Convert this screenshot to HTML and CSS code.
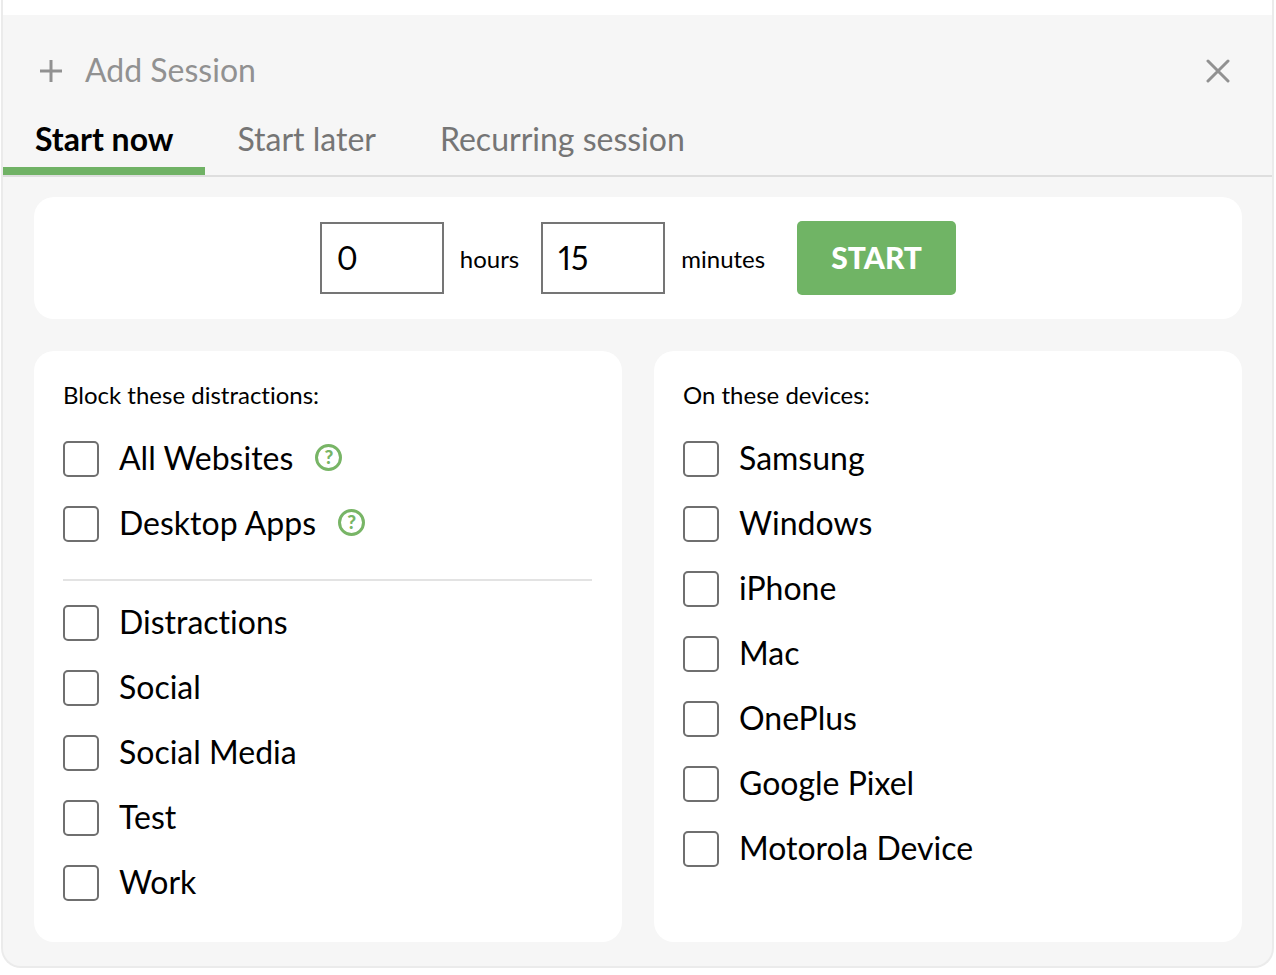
FILE: index.html
```html
<!DOCTYPE html>
<html lang="en">
<head>
<meta charset="utf-8">
<meta name="viewport" content="width=device-width, initial-scale=1">
<title>Add Session</title>
<link rel="stylesheet" href="styles.css">
</head>
<body>
<main class="panel">
  <header class="panel-header">
    <h1 class="panel-title">
      <svg class="icon" viewBox="0 0 24 24" aria-hidden="true"><path d="M12 1v22M1 12h22"/></svg>
      <span class="panel-name">Add Session</span>
    </h1>
    <button class="close" type="button" aria-label="Close">
      <svg class="icon icon-close" viewBox="0 0 24 24" aria-hidden="true"><path d="M2 2l20 20M22 2L2 22"/></svg>
    </button>
  </header>
  <nav class="tabs" role="tablist">
    <button class="tab tab-active" type="button" role="tab" aria-selected="true">Start now</button>
    <button class="tab" type="button" role="tab" aria-selected="false">Start later</button>
    <button class="tab" type="button" role="tab" aria-selected="false">Recurring session</button>
  </nav>
  <form class="content">
    <section class="card duration">
      <input class="time" id="hours" type="text" inputmode="numeric" value="0">
      <label class="unit unit-hours" for="hours">hours</label>
      <input class="time" id="minutes" type="text" inputmode="numeric" value="15">
      <label class="unit unit-minutes" for="minutes">minutes</label>
      <button class="start" type="button">START</button>
    </section>
    <div class="columns">
      <section class="card list-card">
        <h2 class="list-title">Block these distractions:</h2>
        <ul class="list">
          <li class="row"><label class="option"><input class="check" type="checkbox"><span class="name">All Websites</span></label><button class="help" type="button" aria-label="About all websites">?</button></li>
          <li class="row"><label class="option"><input class="check" type="checkbox"><span class="name">Desktop Apps</span></label><button class="help" type="button" aria-label="About desktop apps">?</button></li>
        </ul>
        <hr class="divider">
        <ul class="list">
          <li class="row"><label class="option"><input class="check" type="checkbox"><span class="name">Distractions</span></label></li>
          <li class="row"><label class="option"><input class="check" type="checkbox"><span class="name">Social</span></label></li>
          <li class="row"><label class="option"><input class="check" type="checkbox"><span class="name">Social Media</span></label></li>
          <li class="row"><label class="option"><input class="check" type="checkbox"><span class="name">Test</span></label></li>
          <li class="row"><label class="option"><input class="check" type="checkbox"><span class="name">Work</span></label></li>
        </ul>
      </section>
      <section class="card list-card">
        <h2 class="list-title">On these devices:</h2>
        <ul class="list">
          <li class="row"><label class="option"><input class="check" type="checkbox"><span class="name">Samsung</span></label></li>
          <li class="row"><label class="option"><input class="check" type="checkbox"><span class="name">Windows</span></label></li>
          <li class="row"><label class="option"><input class="check" type="checkbox"><span class="name">iPhone</span></label></li>
          <li class="row"><label class="option"><input class="check" type="checkbox"><span class="name">Mac</span></label></li>
          <li class="row"><label class="option"><input class="check" type="checkbox"><span class="name">OnePlus</span></label></li>
          <li class="row"><label class="option"><input class="check" type="checkbox"><span class="name">Google Pixel</span></label></li>
          <li class="row"><label class="option"><input class="check" type="checkbox"><span class="name">Motorola Device</span></label></li>
        </ul>
      </section>
    </div>
  </form>
</main>
</body>
</html>
```
FILE: styles.css
```css
* { box-sizing: border-box; }

body {
  margin: 0;
  background: #fff;
  color: #000;
  font-family: Lato, "Liberation Sans", sans-serif;
  font-size: 32px;
  font-variant-ligatures: none;
  line-height: 36px;
}

button, input { font: inherit; color: inherit; }

button {
  padding: 0;
  border: 0;
  background: none;
  cursor: pointer;
}

.panel {
  margin: 0 2px 0 1px;
  padding-top: 15px;
  border: 2px solid #ebebeb;
  border-top: 0;
  border-radius: 0 0 20px 20px;
  background: linear-gradient(#fff 15px, #f6f6f6 15px);
}

.panel-header {
  display: flex;
  align-items: center;
  justify-content: space-between;
  padding: 37px 42px 0 36px;
  color: #919191;
}

.panel-title {
  display: flex;
  align-items: center;
  gap: 22px;
  margin: 0;
  font-size: inherit;
  font-weight: 400;
}

.panel-name, .name { padding-bottom: 2px; line-height: 34px; }
.panel-title, .close { padding-top: 1px; }

.icon {
  display: block;
  width: 24px;
  height: 24px;
  fill: none;
  stroke: currentColor;
  stroke-width: 3;
}

.icon-close { stroke-linecap: round; }

.tabs {
  display: flex;
  margin-top: 16px;
  border-bottom: 2px solid #dedede;
}

.tab {
  padding: 16px 32px 10px;
  border-bottom: 8px solid transparent;
  color: #757575;
}

.tab-active {
  border-bottom-color: #70b265;
  color: #000;
  font-weight: 700;
}

.content { padding: 20px 30px 24px 31px; }

.card {
  border-radius: 20px;
  background: #fff;
}

.duration {
  display: flex;
  align-items: center;
  justify-content: center;
  padding: 24px;
}

.time {
  width: 124px;
  height: 72px;
  padding: 0 16px 2px 15px;
  border: 2px solid #757575;
  border-radius: 0;
  background: #fff;
  font-variant-numeric: proportional-nums;
}

.unit {
  padding-top: 2px;
  font-size: 24px;
}

.unit-hours { margin: 0 22px 0 16px; }
.unit-minutes { margin: 0 32px 0 16px; }

.start {
  min-width: 159px;
  height: 74px;
  padding-bottom: 2px;
  border-radius: 5px;
  background: #70b465;
  color: #fff;
  font-size: 30px;
  font-weight: 900;
}

.columns {
  display: grid;
  grid-template-columns: 1fr 1fr;
  gap: 32px;
  margin-top: 32px;
}

.list-card { padding: 26px 30px 41px 29px; }

.list-title {
  margin: 0 0 28px;
  font-size: 24px;
  font-weight: 400;
}

.list {
  display: grid;
  gap: 29px;
  margin: 0;
  padding: 0;
  list-style: none;
}

.row {
  display: flex;
  align-items: center;
  gap: 22px;
}

.option {
  display: flex;
  align-items: center;
  gap: 20px;
}

.check {
  width: 36px;
  height: 36px;
  margin: 0;
  border: 2px solid #6f6f6f;
  border-radius: 5px;
  background: #fff;
  appearance: none;
}

.check:checked { background: #70b465; }

.help {
  width: 27px;
  height: 27px;
  margin-bottom: 4px;
  border: 3px solid #78b566;
  border-radius: 50%;
  color: #78b566;
  font-size: 19px;
  font-weight: 900;
  line-height: 20px;
}

.divider {
  height: 2px;
  margin: 37px 0 24px;
  border: 0;
  background: #e3e3e3;
}
```
